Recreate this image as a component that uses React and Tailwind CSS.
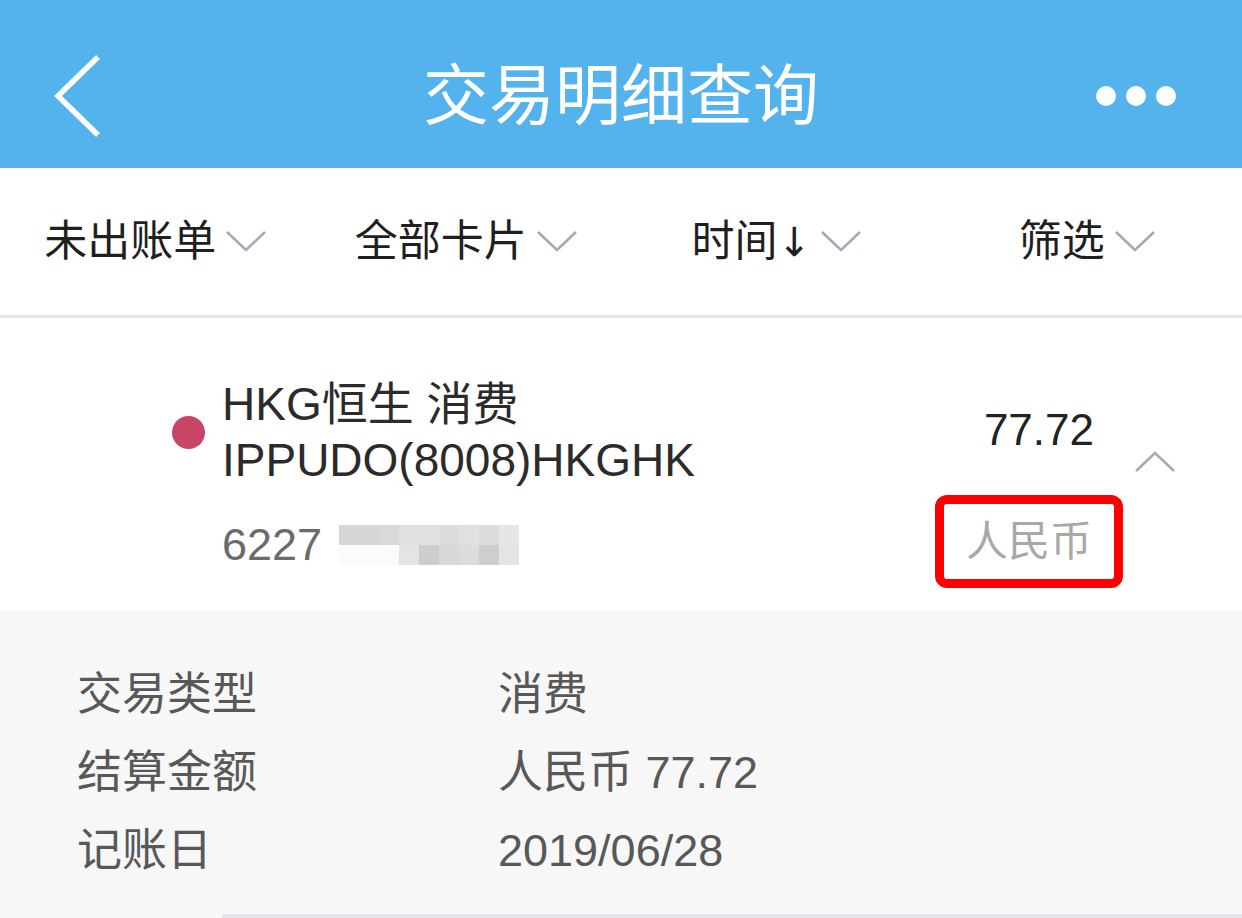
import React from "react";

const filters = [["未出账单"], ["全部卡片"], ["时间", "↓"], ["筛选"]];

// pixelated card number mask, two rows of 9 blocks
const maskTop = [
  "bg-[#d6d6d6]", "bg-[#d6d6d6]", "bg-[#d9d9d9]", "bg-[#e0e0e0]", "bg-[#e0e0e0]",
  "bg-[#dcdcdc]", "bg-[#e1e1e1]", "bg-[#dcdcdc]", "bg-[#e6e6e6]",
];
const maskBottom = [
  "bg-[#fbfbfb]", "bg-[#fbfbfb]", "bg-[#fbfbfb]", "bg-[#e4e4e4]", "bg-[#cdcdcd]",
  "bg-[#d8d8d8]", "bg-[#dcdcdc]", "bg-[#cecece]", "bg-[#e4e4e4]",
];

const details = [
  ["交易类型", "消费"],
  ["结算金额", "人民币 77.72"],
  ["记账日", "2019/06/28"],
];

function Chevron({ up = false }) {
  return (
    <svg width="40" height="22" viewBox="0 0 40 22" fill="none">
      <polyline
        points={up ? "1,21 20,3 39,21" : "1,1 20,19 39,1"}
        stroke="#a5a8b6"
        strokeWidth="2.5"
      />
    </svg>
  );
}

export default function App() {
  return (
    <div className="w-[1242px] h-[918px] overflow-hidden bg-white font-['Liberation_Sans','Noto_Sans_CJK_SC',sans-serif]">
      {/* header */}
      <div className="h-[168px] pt-[24px] bg-[#54b3ec] grid grid-cols-[1fr_auto_1fr] items-center">
        <div className="pl-[52px]">
          <svg width="50" height="84" viewBox="0 0 50 84" fill="none">
            <polyline points="46,3 6,42 46,81" stroke="white" strokeWidth="5.5" />
          </svg>
        </div>
        <div className="text-white text-[66px] leading-none">交易明细查询</div>
        <div className="flex justify-end pr-[66px] gap-[10px]">
          <span className="w-[20px] h-[20px] rounded-full bg-white" />
          <span className="w-[20px] h-[20px] rounded-full bg-white" />
          <span className="w-[20px] h-[20px] rounded-full bg-white" />
        </div>
      </div>

      {/* filter bar */}
      <div className="h-[150px] grid grid-cols-4 items-center border-b-[3px] border-[#e5e5ea]">
        {filters.map(([f, arrow]) => (
          <div key={f} className="flex items-center justify-center gap-[10px]">
            <span className="text-[43px] leading-none text-[#1f1f1f]">
              {f}
              {arrow && <span className="font-['DejaVu_Sans',sans-serif] text-[40px]">{arrow}</span>}
            </span>
            <Chevron />
          </div>
        ))}
      </div>

      {/* transaction row */}
      <div className="h-[292px] flex">
        <div className="pl-[172px] pt-[58px] w-[935px] shrink-0">
          <div className="flex items-center">
            <span className="w-[33px] h-[33px] rounded-full bg-[#c94566] mr-[17px]" />
            <div className="text-[46px] leading-[56px] text-[#2b2b2b]">
              <div>HKG恒生 消费</div>
              <div>IPPUDO(8008)HKGHK</div>
            </div>
          </div>
          <div className="pl-[50px] mt-[29px] flex items-center">
            <span className="text-[45px] leading-[56px] text-[#6b6b6b]">6227</span>
            <div className="ml-[17px] flex flex-col">
              <div className="flex">
                {maskTop.map((c, i) => (
                  <span key={i} className={`w-[20px] h-[20px] ${c}`} />
                ))}
              </div>
              <div className="flex">
                {maskBottom.map((c, i) => (
                  <span key={i} className={`w-[20px] h-[20px] ${c}`} />
                ))}
              </div>
            </div>
          </div>
        </div>

        <div className="w-[188px] shrink-0 flex flex-col">
          <div className="mt-[86px] pr-[29px] text-right text-[44px] leading-[52px] text-[#222]">
            77.72
          </div>
          <div className="mt-[39px] h-[93px] border-[9px] border-[#ff0000] rounded-[12px] flex items-center justify-center">
            <span className="text-[42px] leading-none text-[#a8a8a8]">人民币</span>
          </div>
        </div>

        <div className="ml-[12px] mt-[132px]">
          <Chevron up />
        </div>
      </div>

      {/* details */}
      <div className="bg-[#f7f7f7] pt-[46px] h-[308px]">
        {details.map(([k, v]) => (
          <div key={k} className="h-[78px] flex items-center text-[45px] text-[#585858]">
            <span className="pl-[77px] w-[498px]">{k}</span>
            <span>{v}</span>
          </div>
        ))}
        <div className="mt-[24px] ml-[222px] h-[4px] bg-[#e6e6ea]" />
      </div>
    </div>
  );
}
